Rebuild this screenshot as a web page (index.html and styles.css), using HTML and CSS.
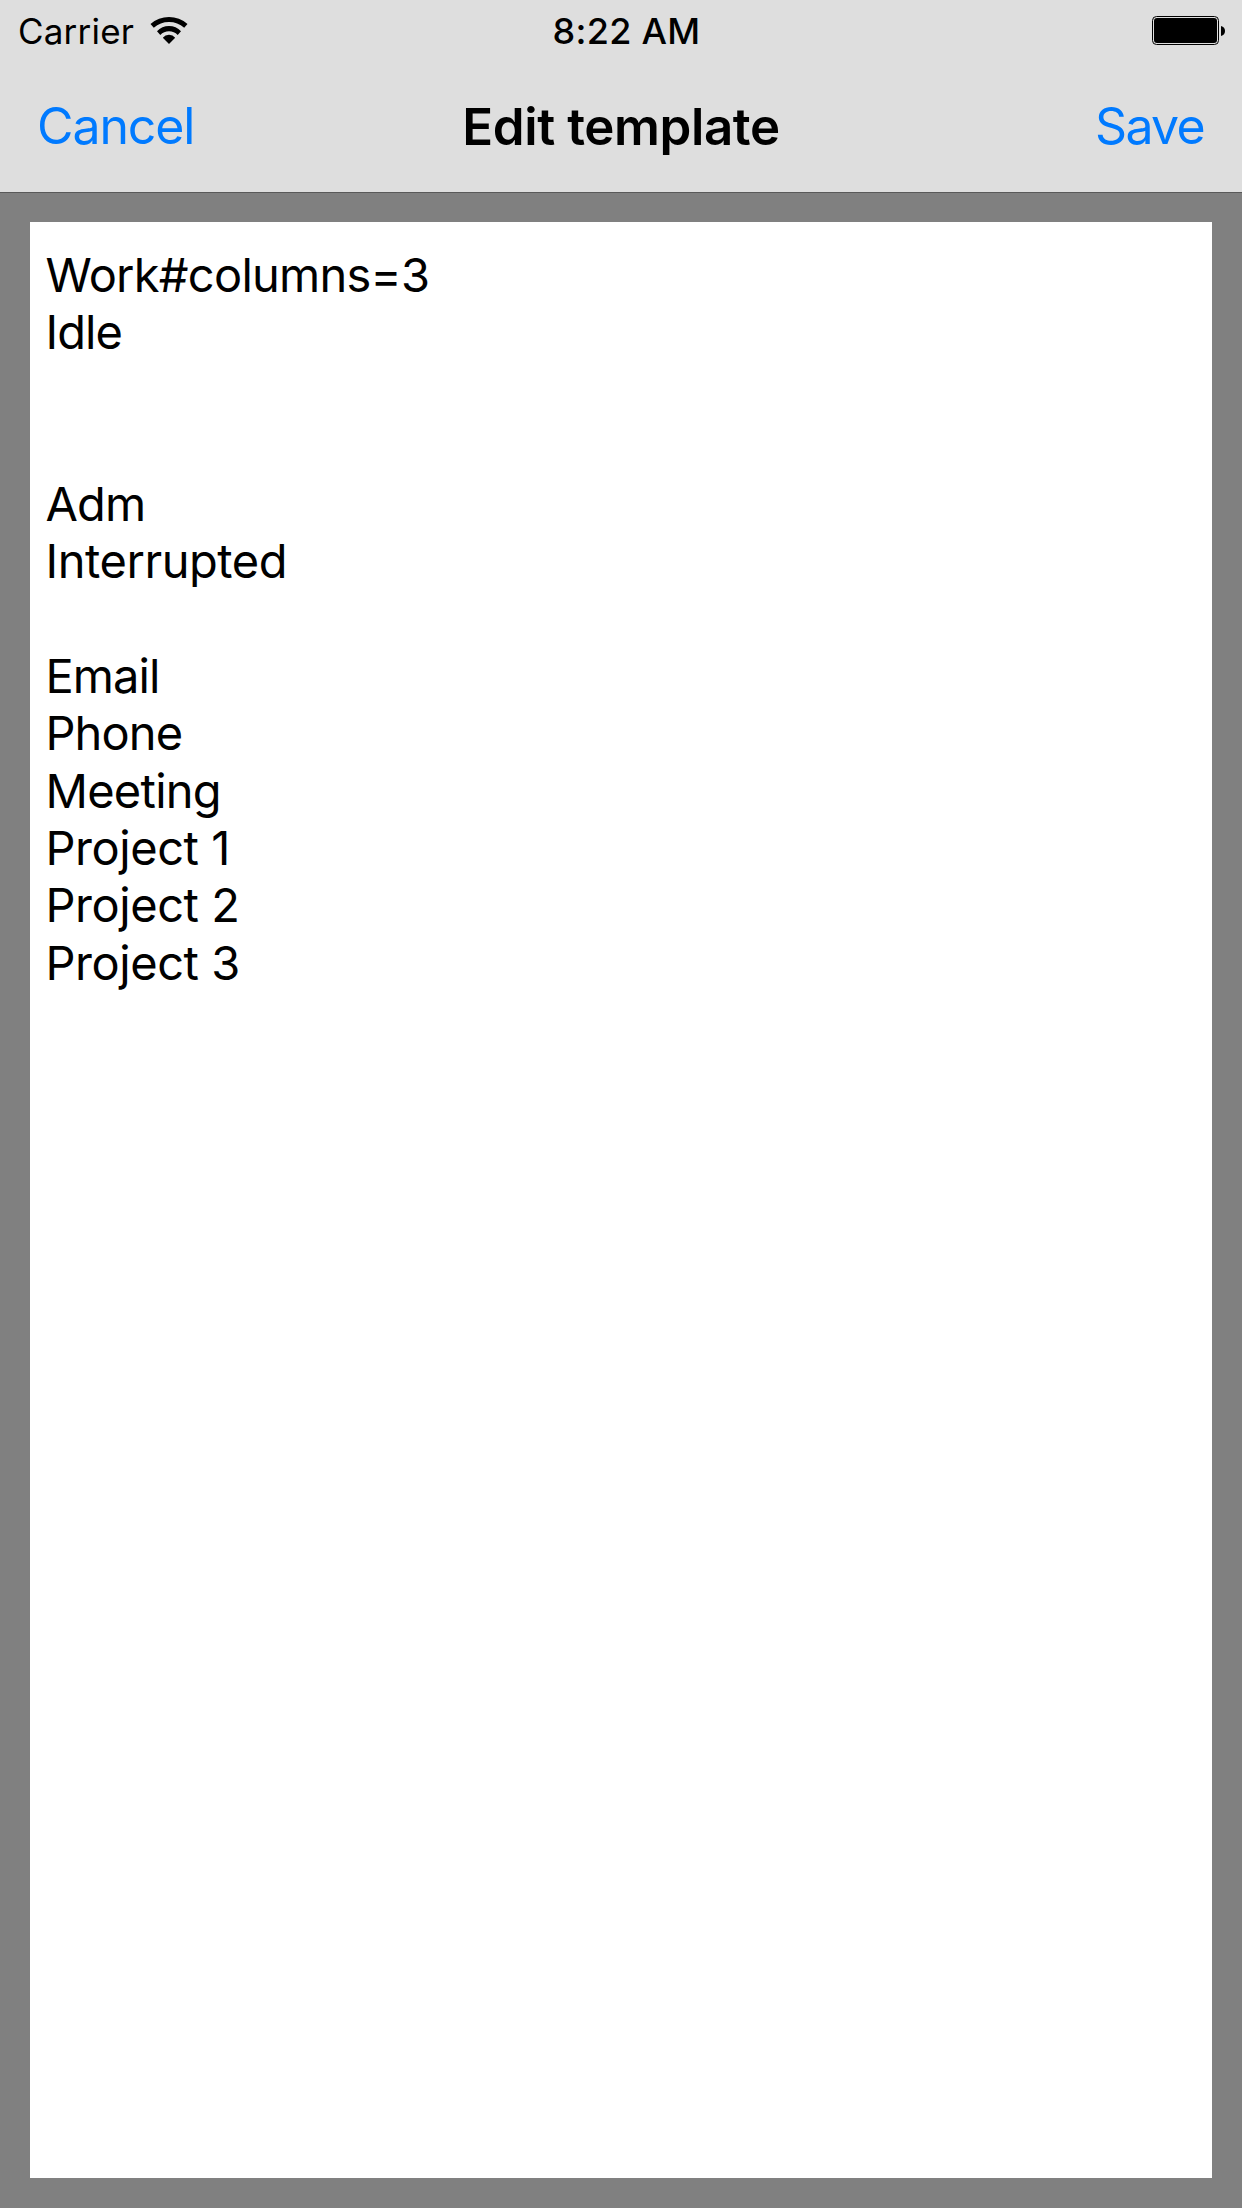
FILE: index.html
```html
<!DOCTYPE html>
<html lang="en">
<head>
<meta charset="utf-8">
<title>Edit template</title>
<link rel="stylesheet" href="styles.css">
</head>
<body>
<header class="header">
  <div class="status">
    <div class="carrier"><span class="carrier-name">Carrier</span>
      <svg class="wifi" width="38" height="29" viewBox="0 0 38 29"><path d="M.5 8A28 28 0 0 1 37.5 8L34.2 11.8A23 23 0 0 0 3.8 11.8zM7 15.2A16.4 16.4 0 0 1 31 15.2L27.7 19A12.1 12.1 0 0 0 10.3 19zM12.8 21.7A7.9 7.9 0 0 1 25.2 21.7L19 28z"/></svg>
    </div>
    <time class="time">8:22 AM</time>
    <svg class="battery" width="73" height="29" viewBox="0 0 73 29"><rect x=".5" y=".5" width="66" height="28" rx="4" fill="none" stroke="#000"/><rect x="2" y="2" width="63" height="25" rx="3"/><path d="M69 10q4 1 4 5t-4 5z"/></svg>
  </div>
  <nav class="nav">
    <button class="action cancel">Cancel</button>
    <h1 class="title">Edit template</h1>
    <button class="action save">Save</button>
  </nav>
</header>
<main class="content">
  <div class="editor">
    <div class="line tight">Work#columns=3</div>
    <div class="line short">Idle</div>
    <div class="line"></div>
    <div class="line"></div>
    <div class="line short">Adm</div>
    <div class="line">Interrupted</div>
    <div class="line"></div>
    <div class="line short">Email</div>
    <div class="line short">Phone</div>
    <div class="line tight">Meeting</div>
    <div class="line">Project 1</div>
    <div class="line">Project 2</div>
    <div class="line">Project 3</div>
  </div>
</main>
</body>
</html>
```
FILE: styles.css
```css
* { box-sizing: border-box; }
body { margin: 0; height: 2208px; display: flex; flex-direction: column; background: #808080; color: #000; font-family: Inter, sans-serif; }
.header { height: 193px; flex: none; background: #dedede; border-bottom: 1px solid #595959; }
.status { height: 60px; display: grid; grid-template-columns: 1fr auto 1fr; align-items: center; padding: 1px 17px 0 18px; font-size: 35px; }
.carrier { display: flex; align-items: center; gap: 16px; letter-spacing: .2px; }
.time { font-weight: 500; font-size: 36px; letter-spacing: .3px; padding-left: 10px; }
.battery { justify-self: end; }
.nav { height: 132px; display: grid; grid-template-columns: 1fr auto 1fr; align-items: center; padding: 0 37px; }
.title { margin: 0; font-size: 51px; font-weight: 600; letter-spacing: -.4px; }
.action { border: 0; padding: 0; background: none; color: #007aff; font: 50px Inter, sans-serif; justify-self: start; }
.cancel { letter-spacing: -1.1px; }
.save { justify-self: end; letter-spacing: -1.7px; margin-right: 1px; }
.content { flex: 1; padding: 29px 30px 30px; display: flex; }
.editor { flex: 1; background: #fff; padding: 24px 15.5px; font-size: 47px; line-height: 57.3px; letter-spacing: -.45px; }
.line { height: 57.3px; white-space: pre; }
.tight { letter-spacing: -.75px; }
.short { letter-spacing: -.9px; }
```
